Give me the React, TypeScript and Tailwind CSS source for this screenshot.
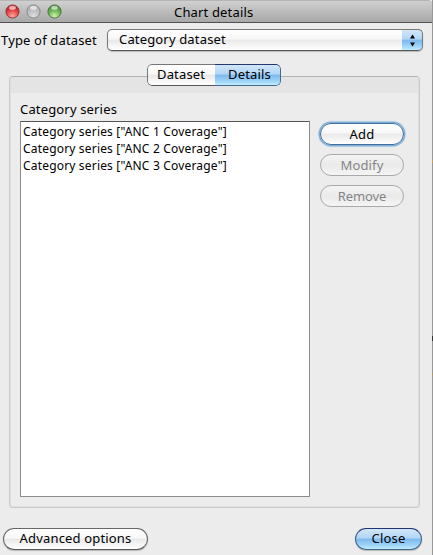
import React from "react";

const glossy =
  "bg-[linear-gradient(to_bottom,#ffffff_0%,#f7f7f7_45%,#e9e9e9_52%,#f4f4f4_75%,#ffffff_100%)]";
const aqua =
  "bg-[linear-gradient(to_bottom,#d3e6f9_0%,#b2d6f6_44%,#7fbaee_52%,#96cdf8_75%,#c0eeff_100%)]";

function Light({ id, dark, mid, glow, rim }: { id: string; dark: string; mid: string; glow: string; rim: string }) {
  return (
    <svg width="15" height="15" viewBox="0 0 15 15" className="block">
      <defs>
        <radialGradient id={id} cx="0.5" cy="0.85" r="0.8">
          <stop offset="0" stopColor={glow} />
          <stop offset="0.55" stopColor={mid} />
          <stop offset="1" stopColor={dark} />
        </radialGradient>
      </defs>
      <circle cx="7.5" cy="7.5" r="6.6" fill={`url(#${id})`} stroke={rim} strokeWidth="0.9" />
      <ellipse cx="7.5" cy="3.7" rx="3.4" ry="2" fill="#fff" opacity="0.6" />
    </svg>
  );
}

function Row({ n }: { n: number }) {
  return (
    <div className="h-[17px] whitespace-nowrap pl-[2px] text-[12px] leading-[17px] tracking-[0.18px]">
      Category series ["ANC {n} Coverage"]
    </div>
  );
}

export default function App() {
  return (
    <div className="flex h-[555px] w-[433px] overflow-hidden bg-[#ececec] font-['Noto_Sans','Open_Sans',sans-serif] text-[13px] tracking-[0.16px] text-black">
      <div className="flex w-[432px] flex-col">
        <header className="flex h-[23px] shrink-0 items-center rounded-tr-[4px] border-b border-[#515151] border-t border-t-[#b5b5b5] bg-linear-to-b from-[#d0d0d0] to-[#a8a8a8] pl-[5px]">
          <div className="flex w-[57px] gap-[6px]">
            <Light id="red" dark="#b51c20" mid="#e5484a" glow="#ffaaa0" rim="#8e3436" />
            <Light id="gray" dark="#aaaaaa" mid="#c0c0c0" glow="#dddddd" rim="#858585" />
            <Light id="green" dark="#3d8630" mid="#70b85b" glow="#d0f5a5" rim="#47733c" />
          </div>
          <div className="ml-[112px] whitespace-nowrap pt-[2px]">Chart details</div>
        </header>

        <div className="flex h-[41px] shrink-0 pt-[6px]">
          <div className="w-[107px] whitespace-nowrap pl-[1px] leading-[22px]">Type of dataset</div>
          <div className={`flex h-[22px] w-[316px] overflow-hidden rounded-[5px] border border-[#777] border-b-[#555] shadow-[0_1px_1px_#bbb] ${glossy}`}>
            <div className="flex-1 whitespace-nowrap pl-[11px] leading-[18px]">Category dataset</div>
            <div className={`-my-px -mr-px flex w-[21px] items-center justify-center rounded-r-[5px] border border-l-0 border-[#31588e] border-t-[#20306e] ${aqua}`}>
              <svg width="5" height="13" viewBox="0 0 5 13">
                <path d="M2.5 0.5 L5 4.5 H0Z M2.5 12.5 L5 8.5 H0Z" fill="#000" />
              </svg>
            </div>
          </div>
        </div>

        <div className="grid shrink-0 grid-cols-[432px]">
          <main className="col-start-1 row-start-1 ml-[9px] mt-[12px] flex h-[432px] w-[411px] flex-col rounded-[4px] border border-[#c9c9c9] border-t-[#b4b4b4] bg-[#ececec] shadow-[inset_0_0_0_1px_#e0e0e0]">
            <div className="mx-px h-[16px] shrink-0 bg-[#e4e4e4]" />
            <div className="pb-[2px] pl-[10px] pt-[6px] leading-[20px]">Category series</div>
            <div className="flex pl-[10px]">
              <div className="h-[376px] w-[290px] border border-[#8b8b8b] border-t-[#555] bg-white pt-[1px]">
                <Row n={1} />
                <Row n={2} />
                <Row n={3} />
              </div>
              <div className="ml-[10px] flex w-[84px] flex-col gap-[9px] pt-[2px] text-center leading-[20px]">
                <button className={`h-[22px] rounded-full border border-[#416f9f] shadow-[0_0_1px_1.5px_#77aad6] ${glossy}`}>Add</button>
                <button className="h-[22px] rounded-full border border-[#a9a9a9] bg-linear-to-b from-[#f4f4f4] via-[#eaeaea] to-[#f5f5f5] text-[#858585]">Modify</button>
                <button className="h-[22px] rounded-full border border-[#a9a9a9] bg-linear-to-b from-[#f4f4f4] via-[#eaeaea] to-[#f5f5f5] tracking-[-0.1px] text-[#858585]">Remove</button>
              </div>
            </div>
          </main>
          <div className="z-10 col-start-1 row-start-1 ml-[147px] flex h-[22px] w-[134px] overflow-hidden rounded-[5px] leading-[18px]">
            <div className={`w-[68px] rounded-l-[5px] border border-r-0 border-[#777] border-b-[#555] pl-[9px] ${glossy}`}>Dataset</div>
            <div className={`w-[66px] rounded-r-[5px] border border-l-0 border-[#45698f] border-t-[#263774] pl-[13px] ${aqua}`}>Details</div>
          </div>
        </div>

        <footer className="mt-[20px] flex h-[22px] justify-between pl-[3px] pr-[10px] leading-[18px]">
          <button className={`w-[145px] rounded-full border border-[#686868] border-b-[#555] pb-[2px] shadow-[0_1px_1px_#bbb] ${glossy}`}>Advanced options</button>
          <button className={`w-[67px] rounded-full border border-[#42638c] border-t-[#223373] pb-[2px] shadow-[0_1px_1px_#bbb] ${aqua}`}>Close</button>
        </footer>
      </div>
      <div className="w-px bg-[#989898]">
        <div className="mt-[160px] h-[3px] bg-[#c99a50]" />
        <div className="mt-[173px] h-[5px] bg-[#333]" />
        <div className="mt-[32px] h-[3px] bg-[#b09864]" />
      </div>
    </div>
  );
}
